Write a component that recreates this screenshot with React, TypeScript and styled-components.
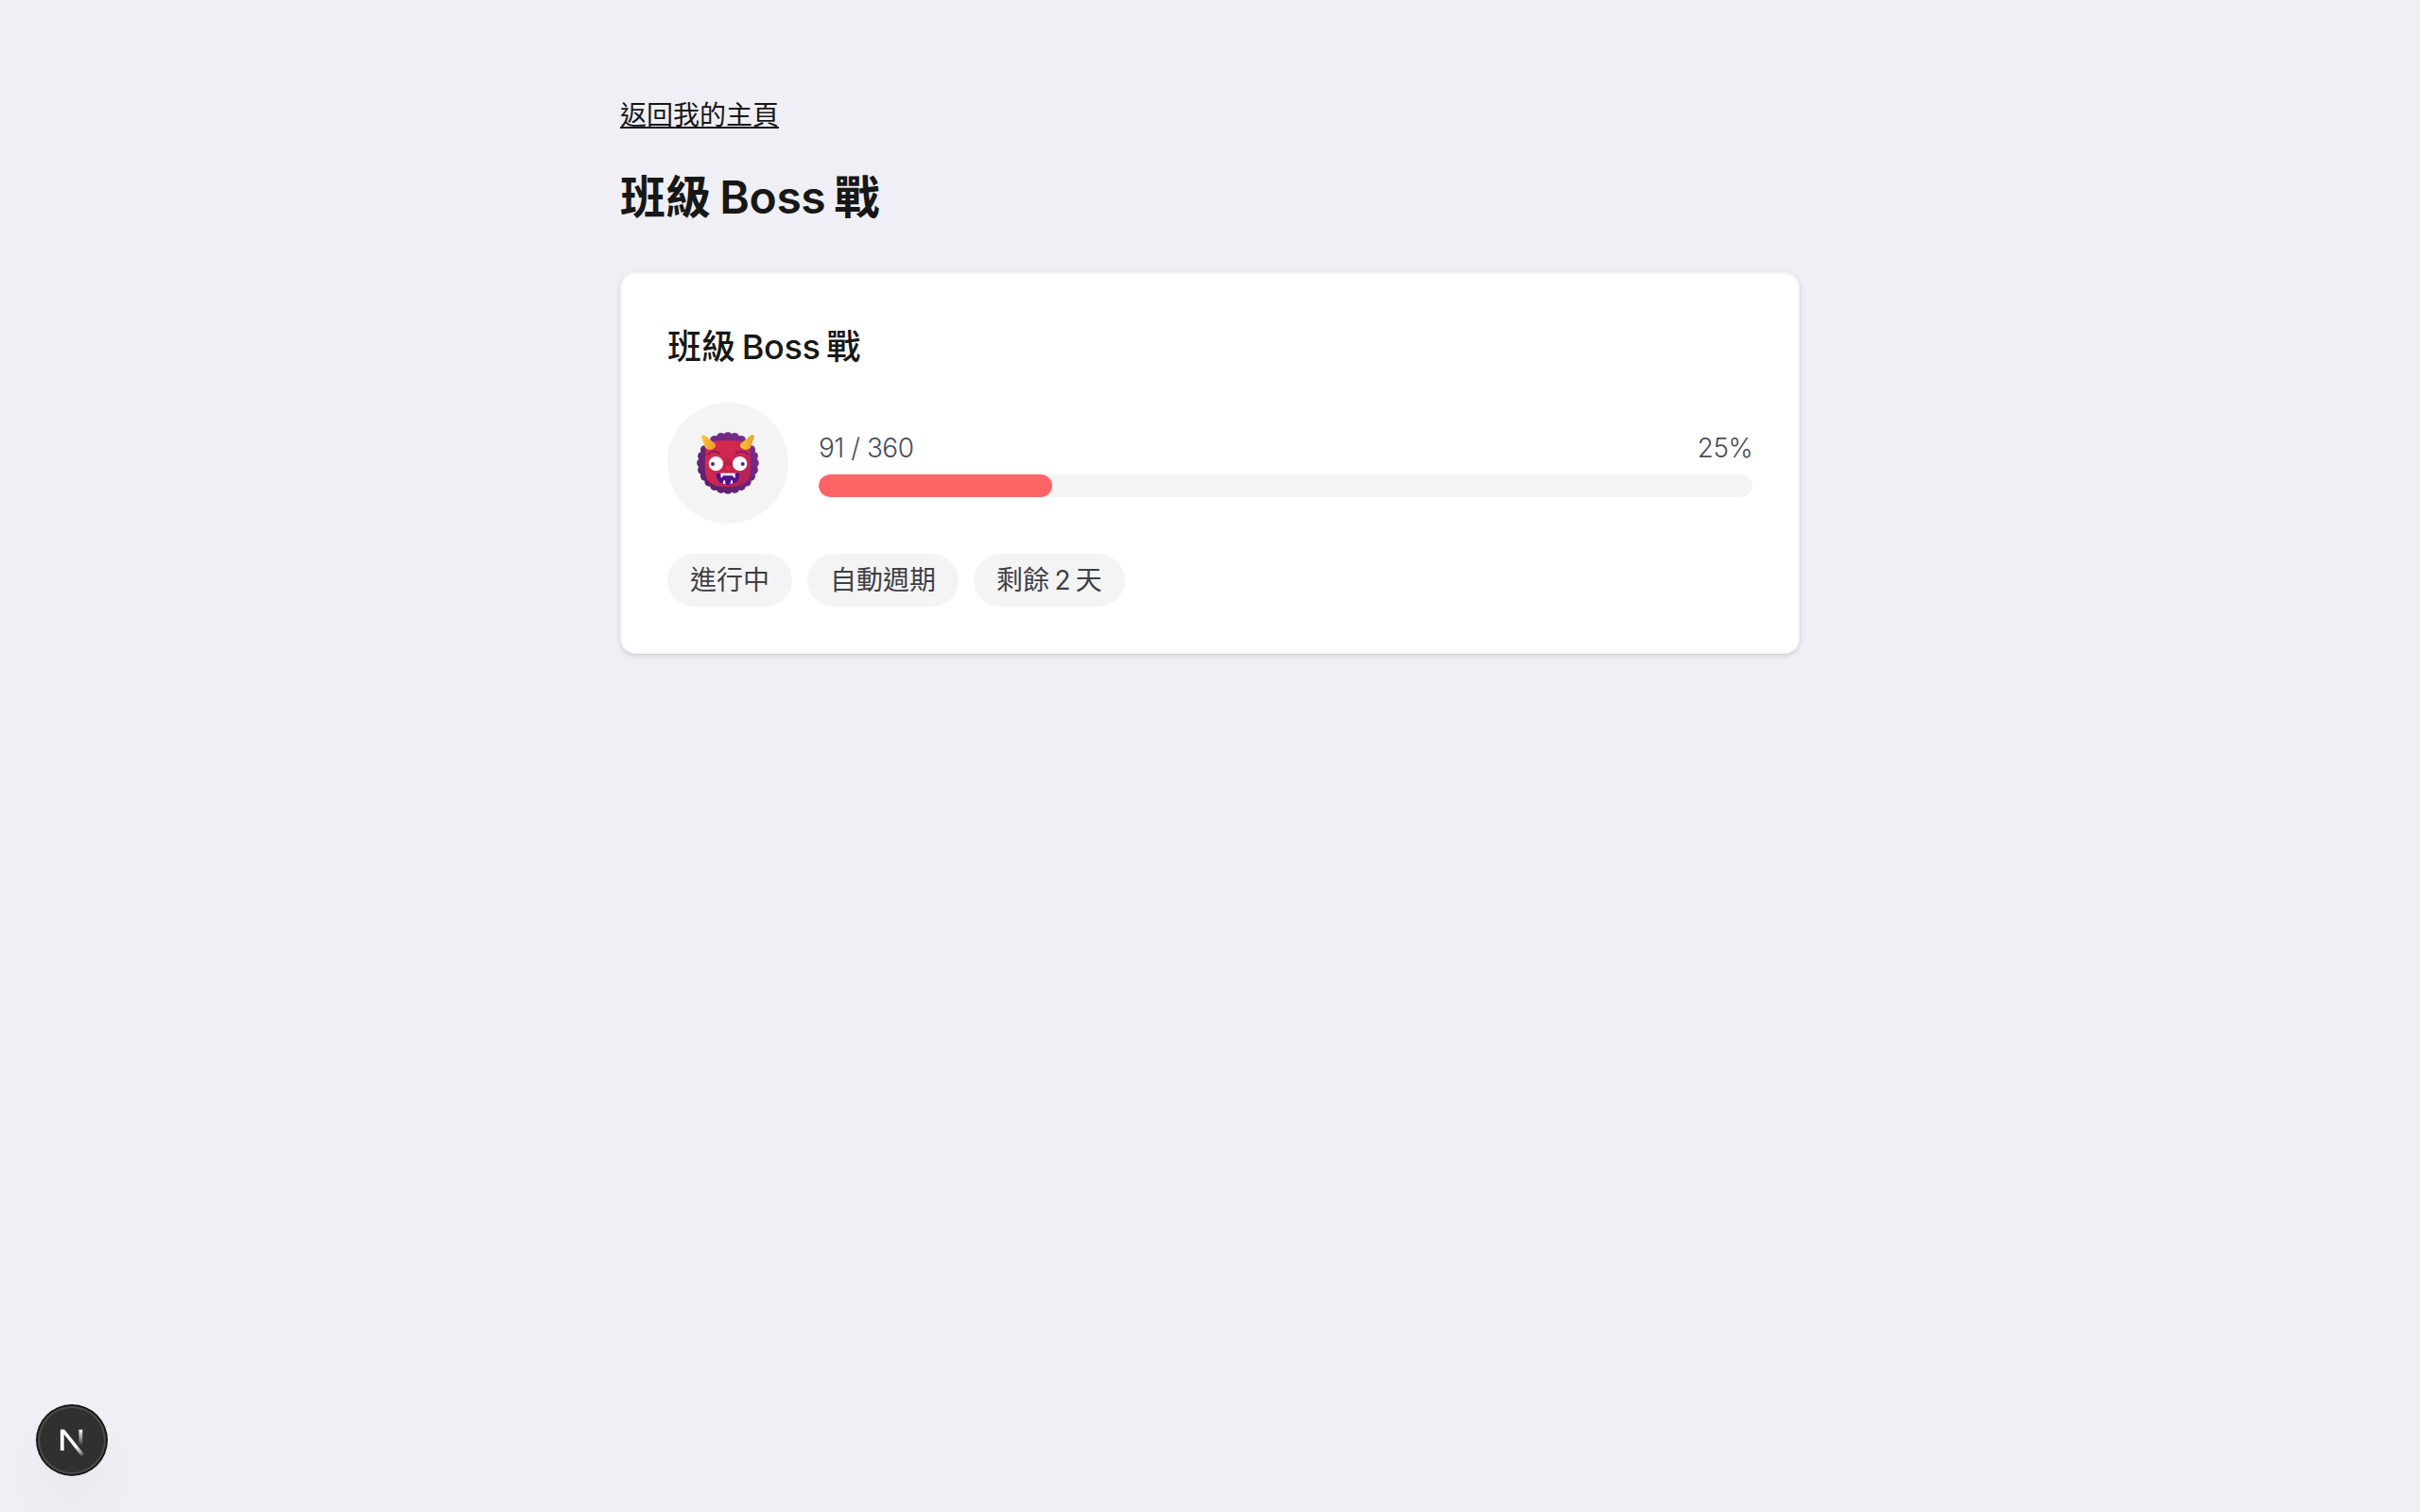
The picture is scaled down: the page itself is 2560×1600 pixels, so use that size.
import React from 'react';
import styled, { createGlobalStyle } from 'styled-components';

const GlobalStyle = createGlobalStyle`
  * {
    box-sizing: border-box;
  }

  body {
    margin: 0;
    min-height: 100vh;
    background: #f0eff5;
    color: #171717;
    font-family: Inter, 'Noto Sans CJK TC', sans-serif;
    font-size: 28px;
    line-height: 40px;
  }
`;

const Page = styled.main`
  width: 1248px;
  margin: 0 auto;
  padding-top: 102px;
  display: flex;
  flex-direction: column;
  align-items: stretch;
`;

const BackLink = styled.a`
  align-self: flex-start;
  color: #171717;
  text-decoration: underline;
  text-decoration-thickness: 2px;
  text-underline-offset: 2px;
`;

const Title = styled.h1`
  margin: 35px 0 47px;
  font-size: 48px;
  font-weight: 700;
  line-height: 64px;
`;

const Latin = styled.span<{ $weight: number }>`
  font-weight: ${({ $weight }) => $weight};
  letter-spacing: -0.4px;
  word-spacing: -2.4px;
`;

const Card = styled.section`
  background: white;
  border: 2px solid #f4f4f5;
  border-radius: 16px;
  padding: 48px;
  display: flex;
  flex-direction: column;
  gap: 32px;
  box-shadow: 0 2px 6px rgba(0, 0, 0, 0.1), 0 2px 4px -2px rgba(0, 0, 0, 0.1);
`;

const CardTitle = styled.h2`
  margin: 1px 0 -1px;
  font-size: 36px;
  font-weight: 500;
  line-height: 56px;
`;

const BossRow = styled.div`
  display: flex;
  align-items: center;
  gap: 32px;
`;

const Avatar = styled.div`
  width: 128px;
  height: 128px;
  flex-shrink: 0;
  border-radius: 50%;
  background: #f4f4f4;
  display: flex;
  align-items: center;
  justify-content: center;
`;

const Health = styled.div`
  flex: 1;
  display: flex;
  flex-direction: column;
  gap: 8px;
`;

const HealthLabels = styled.div`
  display: flex;
  justify-content: space-between;
  color: #4a4e58;
  font-weight: 300;
  letter-spacing: -0.5px;
`;

const Track = styled.div`
  height: 24px;
  border-radius: 12px;
  background: #f4f4f4;
  overflow: hidden;
`;

const Fill = styled.div`
  height: 100%;
  border-radius: 12px;
  background: #ff6467;
`;

const Chips = styled.div`
  display: flex;
  gap: 16px;
`;

const Chip = styled.span`
  padding: 8px 24px;
  border-radius: 28px;
  background: #f4f4f4;
  color: #3f3f46;
  white-space: nowrap;
  word-spacing: -2.5px;
`;

const DevBadge = styled.button`
  position: fixed;
  left: 40px;
  bottom: 40px;
  width: 72px;
  height: 72px;
  padding: 0;
  border: none;
  border-radius: 50%;
  background: #303030;
  box-shadow: 0 0 0 2px #171717, inset 0 0 0 2px rgba(255, 255, 255, 0.14),
    0 32px 64px -16px rgba(0, 0, 0, 0.12);

  svg {
    display: block;
  }
`;

// scalloped mane, one bump per step around the head
const mane = Array.from({ length: 24 }, (_, i) => {
  const angle = (i / 24) * Math.PI * 2;
  return { x: 150 + Math.cos(angle) * 84, y: 150 + Math.sin(angle) * 84 };
});

function OgreFace() {
  return (
    <svg width="70" height="70" viewBox="45 45 210 210">
      <defs>
        <linearGradient id="mane" gradientUnits="userSpaceOnUse" x1="220" y1="60" x2="80" y2="240">
          <stop offset="0" stopColor="#7b2d91" />
          <stop offset="1" stopColor="#5b2066" />
        </linearGradient>
        <linearGradient id="skin" x1="0" y1="0" x2="1" y2="1">
          <stop offset="0" stopColor="#dc2b49" />
          <stop offset="0.6" stopColor="#cb2455" />
          <stop offset="1" stopColor="#a92358" />
        </linearGradient>
        <linearGradient id="horn" x1="0" y1="0" x2="1" y2="0">
          <stop offset="0" stopColor="#ffc83f" />
          <stop offset="1" stopColor="#e79a2b" />
        </linearGradient>
      </defs>
      <g fill="url(#mane)">
        {mane.map((bump, i) => (
          <circle key={i} cx={bump.x} cy={bump.y} r="14.5" />
        ))}
        <circle cx="150" cy="150" r="92" />
      </g>
      <path
        d="M109 80 Q150 76 191 80 Q212 82 218 103 Q226 150 221 187 Q215 216 184 223 Q150 229 116 223 Q85 216 79 187 Q74 150 82 103 Q88 82 109 80Z"
        fill="url(#skin)"
      />
      <path d="M66 66 Q68 58 77 62 L108 87 Q115 94 108 101 Q98 111 85 106 Q78 104 76 97Z" fill="url(#horn)" />
      <path d="M234 66 Q232 58 223 62 L192 87 Q185 94 192 101 Q202 111 215 106 Q222 104 224 97Z" fill="url(#horn)" />
      <g fill="none" stroke="#84205d" strokeWidth="6" strokeLinecap="round">
        <path d="M87 122 Q102 106 125 119" />
        <path d="M213 122 Q198 106 175 119" />
      </g>
      <path d="M142 139 Q150 132 158 139 L167 168 Q166 180 150 177 Q134 180 133 168Z" fill="#bb2148" />
      <ellipse cx="151" cy="166" rx="10" ry="8" fill="#d52b40" />
      <circle cx="112" cy="152" r="23" fill="#fff" />
      <circle cx="188" cy="152" r="23" fill="#fff" />
      <circle cx="102" cy="153" r="6" fill="#5b2370" />
      <circle cx="197" cy="153" r="6" fill="#5b2370" />
      <path d="M113 183 H187 Q188 217 150 219 Q112 217 113 183Z" fill="#53108f" />
      <path d="M127 182 H173 V197 Q168 198 165 190 H135 Q132 198 128 197Z" fill="#fff" />
      <path d="M134 215 Q136 203 140 203 L143 217Z M157 217 L161 203 Q166 205 166 214Z" fill="#fff" />
    </svg>
  );
}

function NextMark() {
  return (
    <svg width="72" height="72" viewBox="0 0 36 36" fill="none">
      <defs>
        <linearGradient id="diagonal" gradientUnits="userSpaceOnUse" x1="9.2" y1="9.9" x2="13.4" y2="15.3">
          <stop stopColor="#fff" />
          <stop offset="0.6" stopColor="#fff" stopOpacity="0.55" />
          <stop offset="1" stopColor="#fff" stopOpacity="0" />
        </linearGradient>
        <linearGradient id="stem" gradientUnits="userSpaceOnUse" x1="11.8" y1="1" x2="11.8" y2="9.6">
          <stop stopColor="#fff" />
          <stop offset="1" stopColor="#fff" stopOpacity="0" />
        </linearGradient>
      </defs>
      <g transform="translate(10.5 11.4)" strokeWidth="1.9">
        <path d="M2.4 12.1 V1" stroke="#fff" />
        <path d="M1.45 1 H3.6 L14 14 L12.5 15.1 L2.4 2.2Z" fill="url(#diagonal)" />
        <path d="M12.2 1 V9.6" stroke="url(#stem)" />
      </g>
    </svg>
  );
}

export default function App() {
  const hp = 91;
  const maxHp = 360;
  const percent = Math.round((hp / maxHp) * 100);

  return (
    <>
      <GlobalStyle />
      <Page lang="zh-Hant">
        <BackLink href="#">返回我的主頁</BackLink>
        <Title>
          班級<Latin $weight={600}> Boss </Latin>戰
        </Title>

        <Card>
          <CardTitle>
            班級<Latin $weight={500}> Boss </Latin>戰
          </CardTitle>

          <BossRow>
            <Avatar>
              <OgreFace />
            </Avatar>
            <Health>
              <HealthLabels>
                <span>
                  {hp} / {maxHp}
                </span>
                <span>{percent}%</span>
              </HealthLabels>
              <Track>
                <Fill style={{ width: `${percent}%` }} />
              </Track>
            </Health>
          </BossRow>

          <Chips>
            <Chip>進行中</Chip>
            <Chip>自動週期</Chip>
            <Chip>剩餘 2 天</Chip>
          </Chips>
        </Card>
      </Page>

      <DevBadge aria-label="Open Next.js Dev Tools">
        <NextMark />
      </DevBadge>
    </>
  );
}
